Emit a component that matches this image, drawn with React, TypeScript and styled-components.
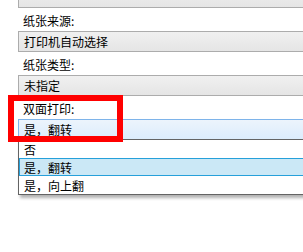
import React from "react";
import styled, { createGlobalStyle } from "styled-components";

const GlobalStyle = createGlobalStyle`
  html, body {
    margin: 0;
    padding: 0;
    background: #ffffff;
    overflow: hidden;
  }
  body {
    font-family: "Noto Sans CJK SC", "Noto Sans", sans-serif;
    font-size: 12px;
    color: #000000;
  }
`;

const options = ["否", "是，翻转", "是，向上翻"];

const App: React.FC = () => {
  return (
    <>
      <GlobalStyle />
      <Frame>
        <Page>
          <Combo>
            <ComboText>&nbsp;</ComboText>
          </Combo>
          <Label>纸张来源:</Label>
          <Combo>
            <ComboText>打印机自动选择</ComboText>
          </Combo>
          <Label>纸张类型:</Label>
          <Combo>
            <ComboText>未指定</ComboText>
          </Combo>
          <Label>双面打印:</Label>
          <ComboWrap>
            <Combo focused>
              <ComboText>是，翻转</ComboText>
            </Combo>
            <DropList>
              {options.map((o) => (
                <DropItem key={o} selected={o === "是，翻转"}>
                  {o}
                </DropItem>
              ))}
            </DropList>
          </ComboWrap>
          <Highlight />
        </Page>
      </Frame>
    </>
  );
};

export default App;

const Frame = styled.div`
  width: 303px;
  height: 252px;
  overflow: hidden;
`;

const Page = styled.div`
  position: relative;
  margin-top: -13px;
  padding-left: 18px;
`;

const Label = styled.div`
  box-sizing: border-box;
  height: 23px;
  padding-top: 2px;
  line-height: 21px;
  padding-left: 5px;
  white-space: nowrap;
`;

const ComboWrap = styled.div`
  position: relative;
`;

const Combo = styled.div<{ focused?: boolean }>`
  box-sizing: border-box;
  height: 21px;
  width: 300px;
  display: flex;
  align-items: center;
  padding-left: 5px;
  border: 1px solid ${(p) => (p.focused ? "#7eb4ea" : "#acacac")};
  background: ${(p) =>
    p.focused
      ? "linear-gradient(#ecf4fc, #dcecfc)"
      : "linear-gradient(#f0f0f0, #e5e5e5)"};
`;

const ComboText = styled.span`
  white-space: nowrap;
  line-height: 19px;
`;

const DropList = styled.div`
  position: absolute;
  top: 20px;
  left: 0;
  width: 300px;
  box-sizing: border-box;
  background: #ffffff;
  border: 1px solid #646464;
  box-shadow: 2px 3px 3px rgba(0, 0, 0, 0.3);
`;

const DropItem = styled.div<{ selected?: boolean }>`
  box-sizing: border-box;
  height: 18px;
  line-height: 17px;
  padding-left: 4px;
  white-space: nowrap;
  border: 1px solid ${(p) => (p.selected ? "#26a0da" : "transparent")};
  background: ${(p) => (p.selected ? "#cbe8f6" : "transparent")};
`;

const Highlight = styled.div`
  position: absolute;
  left: 8px;
  top: 108px;
  width: 115px;
  height: 47px;
  box-sizing: border-box;
  border: 6px solid #ff0000;
  pointer-events: none;
`;
